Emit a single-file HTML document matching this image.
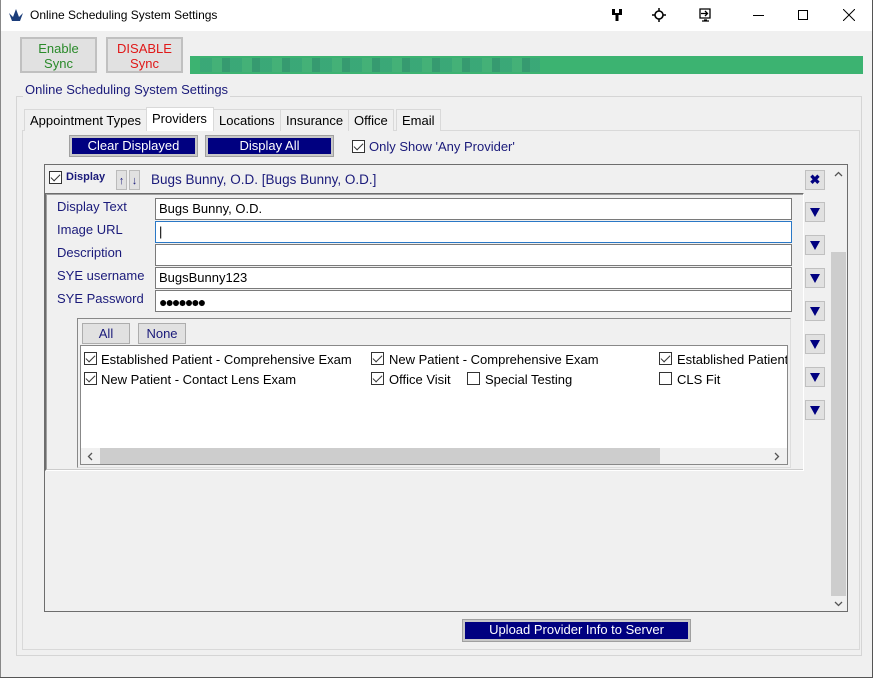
<!DOCTYPE html>
<html><head><style>
*{box-sizing:border-box;margin:0;padding:0}
body{width:873px;height:678px;background:#f0f0f0;font-family:"Liberation Sans",sans-serif;font-size:13px;position:relative;overflow:hidden}
.a{position:absolute}
.btn{position:absolute;background:#e1e1e1;border:1px solid #adadad}
.nb{position:absolute;background:#000080;border:2px solid #c8c8c8;outline:1px solid #a0a0a0;color:#fff;text-align:center;line-height:15px;font-size:13px}
.lbl{position:absolute;color:#1a1a7a;font-size:13px}
.inp{position:absolute;left:155px;width:637px;height:22px;background:#fff;border:1px solid #7a7a7a;padding-left:3px;line-height:20px;font-size:13px}
.cb{position:absolute;width:13px;height:13px;border:1px solid #333;background:#fff}
.cb.c::after{content:"";position:absolute;left:3px;top:0px;width:4px;height:8px;border:solid #333;border-width:0 1.5px 1.5px 0;transform:rotate(45deg)}
.dn{position:absolute;left:805px;width:20px;height:20px;background:#e1e1e1;border:1px solid #c0c0c0}
.dn::after{content:"";position:absolute;left:4px;top:5px;border-left:5px solid transparent;border-right:5px solid transparent;border-top:9px solid #000080}
.tab{position:absolute;top:109px;height:22px;border:1px solid #d9d9d9;border-bottom:none;background:#f0f0f0;padding:0 5px;line-height:21px}
.it{position:absolute;font-size:13px;color:#000}
</style></head><body>
<div class="a" style="left:0;top:0;width:873px;height:31px;background:#fff"></div>
<div class="a" style="left:0;top:0;width:1px;height:678px;background:#888"></div>
<div class="a" style="left:872px;top:0;width:1px;height:678px;background:#555"></div>
<div class="a" style="left:0;top:677px;width:873px;height:1px;background:#555"></div>
<svg class="a" style="left:8px;top:8px" width="16" height="15" viewBox="0 0 16 15"><path d="M1 5 L4 13 L12 13 L15 5 L11 9 L8 1 L5 9Z" fill="#1b3d7a"/></svg>
<div class="a" style="left:30px;top:8px;font-size:12px;color:#000">Online Scheduling System Settings</div>
<svg class="a" style="left:611px;top:9px" width="12" height="12"><path d="M1 0v4h3V0M8 0v4h3V0M1 4h10v2H1zM4.5 6h3v6h-3z" fill="#000"/></svg>
<svg class="a" style="left:652px;top:8px" width="14" height="14"><circle cx="7" cy="7" r="4" fill="none" stroke="#000" stroke-width="1.6"/><path d="M7 0v3M7 11v3M0 7h3M11 7h3" stroke="#000" stroke-width="1.5"/></svg>
<svg class="a" style="left:698px;top:8px" width="14" height="14"><path d="M2 1h10v9H2z M6 12h3 M4 13h7" fill="none" stroke="#000" stroke-width="1.3"/><path d="M3 5.5h6M7 3l2.5 2.5L7 8" fill="none" stroke="#000" stroke-width="1.3"/></svg>
<div class="a" style="left:753px;top:15px;width:11px;height:1px;background:#000"></div>
<div class="a" style="left:798px;top:10px;width:10px;height:10px;border:1px solid #000"></div>
<svg class="a" style="left:843px;top:9px" width="12" height="12"><path d="M0 0L12 12M12 0L0 12" stroke="#000" stroke-width="1"/></svg>

<div class="btn" style="left:20px;top:37px;width:77px;height:36px;border:2px solid #c0c0c0;color:#2a8a2a;text-align:center;line-height:15px;padding-top:2px">Enable<br>Sync</div>
<div class="btn" style="left:106px;top:37px;width:77px;height:36px;border:2px solid #c0c0c0;color:#e01818;text-align:center;line-height:15px;padding-top:2px">DISABLE<br>Sync</div>
<div class="a" style="left:190px;top:56px;width:673px;height:18px;background:#3cb371"></div>
<div class="a" style="left:200px;top:58px;width:340px;height:14px;background:repeating-linear-gradient(90deg,#3aa47a 0 12px,#48b07a 12px 22px,#338f6f 22px 30px);opacity:.7"></div>

<div class="a" style="left:16px;top:96px;width:846px;height:560px;border:1px solid #d5d5d5"></div>
<div class="a" style="left:23px;top:82px;background:#f0f0f0;padding:0 2px;color:#1a1a7a;font-size:13px">Online Scheduling System Settings</div>

<div class="a" style="left:22px;top:130px;width:838px;height:520px;border:1px solid #d9d9d9;background:#f0f0f0"></div>
<div class="tab" style="left:24px">Appointment Types</div>
<div class="tab" style="left:146px;top:107px;height:24px;background:#fff;width:68px">Providers</div>
<div class="tab" style="left:213px">Locations</div>
<div class="tab" style="left:280px">Insurance</div>
<div class="tab" style="left:348px">Office</div>
<div class="tab" style="left:396px">Email</div>

<div class="nb" style="left:70px;top:136px;width:127px;height:20px">Clear Displayed</div>
<div class="nb" style="left:206px;top:136px;width:127px;height:20px">Display All</div>
<div class="cb c" style="left:352px;top:140px"></div>
<div class="lbl" style="left:369px;top:139px">Only Show 'Any Provider'</div>

<div class="a" style="left:44px;top:164px;width:804px;height:448px;border:1px solid #6d6d6d"></div>
<div class="cb c" style="left:49px;top:171px"></div>
<div class="a" style="left:66px;top:171px;font-size:11px;font-weight:bold;color:#1a1a7a">Display</div>
<div class="a" style="left:116px;top:170px;width:11px;height:20px;background:#e1e1e1;border:1px solid #bbb;color:#1a1a7a;font-size:11px;text-align:center;line-height:20px">↑</div>
<div class="a" style="left:129px;top:170px;width:11px;height:20px;background:#e1e1e1;border:1px solid #bbb;color:#1a1a7a;font-size:11px;text-align:center;line-height:20px">↓</div>
<div class="a" style="left:151px;top:172px;color:#1a1a7a;font-size:13.5px">Bugs Bunny, O.D. [Bugs Bunny, O.D.]</div>
<div class="a" style="left:805px;top:170px;width:20px;height:20px;background:#e1e1e1;border:1px solid #c0c0c0;color:#000080;font-size:13px;font-weight:bold;text-align:center;line-height:18px">✖</div>
<div class="a" style="left:830px;top:166px;width:17px;height:445px;background:#f0f0f0"></div>
<div class="a" style="left:831px;top:252px;width:15px;height:344px;background:#cdcdcd"></div>
<svg class="a" style="left:834px;top:171px" width="9" height="6"><path d="M1 5L4.5 1.5L8 5" fill="none" stroke="#555" stroke-width="1.3"/></svg>
<svg class="a" style="left:834px;top:601px" width="9" height="6"><path d="M1 1L4.5 4.5L8 1" fill="none" stroke="#555" stroke-width="1.3"/></svg>

<div class="a" style="left:45px;top:193px;width:759px;height:278px;border:1px solid #6d6d6d;border-right-color:#fff;border-bottom-color:#fff"></div>
<div class="a" style="left:46px;top:194px;width:757px;height:276px;border:1px solid #a0a0a0;border-right:none;border-bottom:1px solid #ccc"></div>
<div class="lbl" style="left:57px;top:199px">Display Text</div>
<div class="lbl" style="left:57px;top:222px">Image URL</div>
<div class="lbl" style="left:57px;top:245px">Description</div>
<div class="lbl" style="left:57px;top:268px">SYE username</div>
<div class="lbl" style="left:57px;top:291px">SYE Password</div>
<div class="inp" style="top:198px">Bugs Bunny, O.D.</div>
<div class="inp" style="top:221px;border-color:#2a78c6">|</div>
<div class="inp" style="top:244px"></div>
<div class="inp" style="top:267px">BugsBunny123</div>
<div class="inp" style="top:290px;font-size:14px;letter-spacing:-2px;line-height:22px">●●●●●●●</div>

<div class="dn" style="top:202px"></div>
<div class="dn" style="top:235px"></div>
<div class="dn" style="top:268px"></div>
<div class="dn" style="top:301px"></div>
<div class="dn" style="top:334px"></div>
<div class="dn" style="top:367px"></div>
<div class="dn" style="top:400px"></div>

<div class="a" style="left:77px;top:318px;width:714px;height:150px;border:1px solid #888;border-right-color:#ddd;border-bottom-color:#ddd"></div>
<div class="btn" style="left:82px;top:323px;width:48px;height:21px;text-align:center;line-height:19px;color:#1a1a7a">All</div>
<div class="btn" style="left:138px;top:323px;width:48px;height:21px;text-align:center;line-height:19px;color:#1a1a7a">None</div>
<div class="a" style="left:80px;top:345px;width:708px;height:120px;background:#fff;border:1px solid #888"></div>
<div class="cb c" style="left:84px;top:352px"></div><div class="it" style="left:101px;top:352px">Established Patient - Comprehensive Exam</div>
<div class="cb c" style="left:371px;top:352px"></div><div class="it" style="left:389px;top:352px">New Patient - Comprehensive Exam</div>
<div class="cb c" style="left:659px;top:352px"></div><div class="it" style="left:677px;top:352px;width:110px;overflow:hidden;white-space:nowrap">Established Patient</div>
<div class="cb c" style="left:84px;top:372px"></div><div class="it" style="left:101px;top:372px">New Patient - Contact Lens Exam</div>
<div class="cb c" style="left:371px;top:372px"></div><div class="it" style="left:389px;top:372px">Office Visit</div>
<div class="cb" style="left:467px;top:372px"></div><div class="it" style="left:485px;top:372px">Special Testing</div>
<div class="cb" style="left:659px;top:372px"></div><div class="it" style="left:677px;top:372px">CLS Fit</div>
<div class="a" style="left:81px;top:448px;width:706px;height:16px;background:#f0f0f0"></div>
<div class="a" style="left:100px;top:448px;width:560px;height:16px;background:#cdcdcd"></div>
<svg class="a" style="left:87px;top:452px" width="6" height="9"><path d="M5 1L1.5 4.5L5 8" fill="none" stroke="#555" stroke-width="1.3"/></svg>
<svg class="a" style="left:774px;top:452px" width="6" height="9"><path d="M1 1L4.5 4.5L1 8" fill="none" stroke="#555" stroke-width="1.3"/></svg>

<div class="nb" style="left:463px;top:620px;width:227px;height:21px">Upload Provider Info to Server</div>
</body></html>
